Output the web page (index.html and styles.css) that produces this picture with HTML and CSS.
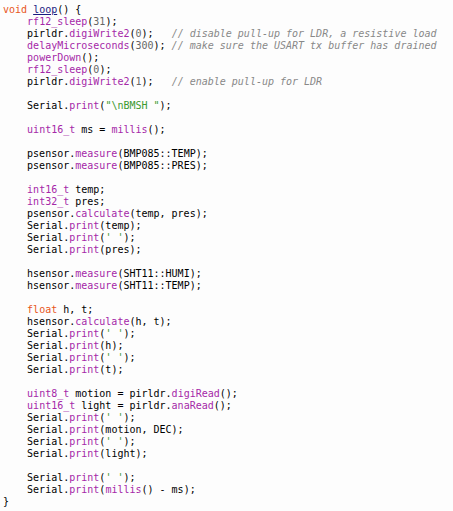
FILE: index.html
```html
<!DOCTYPE html>
<html>
<head>
<meta charset="utf-8">
<link rel="stylesheet" href="styles.css">
</head>
<body>
<pre class="code"><span class="kw">void</span> <span class="fn-def">loop</span>() {
    <span class="fn">rf12_sleep</span>(<span class="num">31</span>);
    pirldr.<span class="fn">digiWrite2</span>(<span class="num">0</span>);   <span class="cm">// disable pull-up for LDR, a resistive load</span>
    <span class="fn">delayMicroseconds</span>(<span class="num">300</span>); <span class="cm">// make sure the USART tx buffer has drained</span>
    <span class="fn">powerDown</span>();
    <span class="fn">rf12_sleep</span>(<span class="num">0</span>);
    pirldr.<span class="fn">digiWrite2</span>(<span class="num">1</span>);   <span class="cm">// enable pull-up for LDR</span>

    Serial.<span class="fn">print</span>(<span class="str">"\nBMSH "</span>);

    <span class="fn">uint16_t</span> ms = <span class="fn">millis</span>();

    psensor.<span class="fn">measure</span>(BMP085::TEMP);
    psensor.<span class="fn">measure</span>(BMP085::PRES);

    <span class="fn">int16_t</span> temp;
    <span class="fn">int32_t</span> pres;
    psensor.<span class="fn">calculate</span>(temp, pres);
    Serial.<span class="fn">print</span>(temp);
    Serial.<span class="fn">print</span>(<span class="str">' '</span>);
    Serial.<span class="fn">print</span>(pres);

    hsensor.<span class="fn">measure</span>(SHT11::HUMI);
    hsensor.<span class="fn">measure</span>(SHT11::TEMP);

    <span class="kw">float</span> h, t;
    hsensor.<span class="fn">calculate</span>(h, t);
    Serial.<span class="fn">print</span>(<span class="str">' '</span>);
    Serial.<span class="fn">print</span>(h);
    Serial.<span class="fn">print</span>(<span class="str">' '</span>);
    Serial.<span class="fn">print</span>(t);

    <span class="fn">uint8_t</span> motion = pirldr.<span class="fn">digiRead</span>();
    <span class="fn">uint16_t</span> light = pirldr.<span class="fn">anaRead</span>();
    Serial.<span class="fn">print</span>(<span class="str">' '</span>);
    Serial.<span class="fn">print</span>(motion, DEC);
    Serial.<span class="fn">print</span>(<span class="str">' '</span>);
    Serial.<span class="fn">print</span>(light);

    Serial.<span class="fn">print</span>(<span class="str">' '</span>);
    Serial.<span class="fn">print</span>(<span class="fn">millis</span>() - ms);
}</pre>
</body>
</html>
```

FILE: styles.css
```css
html, body {
  margin: 0;
  padding: 0;
  background: #fdfdfd;
}
.code {
  margin: 0;
  padding: 4px 0 0 3px;
  font-family: "DejaVu Sans Mono", "Liberation Mono", monospace;
  font-size: 10px;
  line-height: 12px;
  color: #000;
}
.kw { color: #e8561c; }
.fn { color: #a528a8; }
.fn-def { color: #1a1a80; text-decoration: underline; }
.num { color: #666; }
.str { color: #3b9a2f; }
.cm { color: #888; font-style: italic; }
```
